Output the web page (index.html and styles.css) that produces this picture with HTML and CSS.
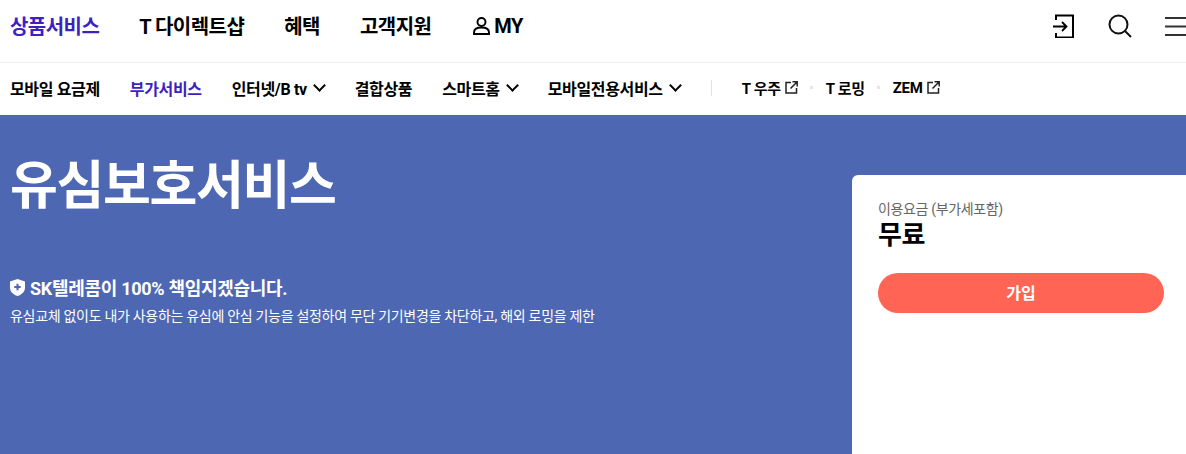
FILE: index.html
```html
<!DOCTYPE html>
<html lang="ko">
<head>
    <meta charset="UTF-8">
    <meta name="viewport" content="width=device-width, initial-scale=1.0">
    <title>유심보호서비스</title>
    <link rel="stylesheet" href="styles.css">
</head>
<body>
    <header class="gnb">
        <nav class="gnb-menu">
            <a class="active">상품서비스</a>
            <a>T 다이렉트샵</a>
            <a>혜택</a>
            <a>고객지원</a>
            <a class="my">
                <svg width="17" height="18" viewBox="0 0 17 18" fill="none" stroke="#000" stroke-width="1.9"><circle cx="8.500" cy="5" r="4"/><path d="M1 17v-1.500C1 12 4 10.500 8.500 10.500s7.500 1.500 7.500 5V17z"/></svg>
                MY
            </a>
        </nav>
        <div class="gnb-icons">
            <svg width="22" height="24" viewBox="0 0 22 24" fill="none" stroke="#000"><path d="M3 6V1.500h17v22H3V19" stroke-width="2"/><path d="M0 12.500h13M9 8l4.500 4.500L9 17" stroke-width="1.800"/></svg>
            <svg width="24" height="24" viewBox="0 0 24 24" fill="none" stroke="#111" stroke-width="2"><circle cx="10.500" cy="10.500" r="9"/><path d="M17 17l6 6"/></svg>
            <svg class="burger" width="21" height="20" viewBox="0 0 21 20" fill="none" stroke="#333" stroke-width="2"><path d="M0 2h21M0 10.500h21M0 19h21"/></svg>
        </div>
    </header>

    <nav class="lnb">
        <a>모바일 요금제</a>
        <a class="active">부가서비스</a>
        <a>인터넷/B tv <i class="chev"></i></a>
        <a>결합상품</a>
        <a>스마트홈 <i class="chev"></i></a>
        <a>모바일전용서비스 <i class="chev"></i></a>
        <span class="divider"></span>
        <div class="ext">
            <a>T 우주 <svg class="out" width="13" height="13" viewBox="0 0 13 13" fill="none" stroke="#222" stroke-width="1.500"><path d="M6 1.500H1v10.500h10.500V7M7.500 .8h4.700v4.700M12 1L5.500 7.500"/></svg></a>
            <span class="dot"></span>
            <a>T 로밍</a>
            <span class="dot"></span>
            <a>ZEM <svg class="out" width="13" height="13" viewBox="0 0 13 13" fill="none" stroke="#222" stroke-width="1.500"><path d="M6 1.500H1v10.500h10.500V7M7.500 .8h4.700v4.700M12 1L5.500 7.500"/></svg></a>
        </div>
    </nav>

    <main class="hero">
        <div class="hero-text">
            <h1>유심보호서비스</h1>
            <p class="lead">
                <svg class="shield" width="15" height="17" viewBox="0 0 15 17"><path fill="#fff" d="M7.500 0L15 2.500V8.500c0 4.200-3.200 7.200-7.500 8.500C3.200 15.700 0 12.700 0 8.500V2.500z"/><path stroke="#4d67b2" stroke-width="2" d="M7.500 4.800v6.500M4.300 8h6.400"/></svg>
                SK텔레콤이 100% 책임지겠습니다.
            </p>
            <p class="desc">유심교체 없이도 내가 사용하는 유심에 안심 기능을 설정하여 무단 기기변경을 차단하고, 해외 로밍을 제한</p>
        </div>
        <aside class="price-card">
            <div class="price-label">이용요금 (부가세포함)</div>
            <div class="price">무료</div>
            <button type="button" class="join-btn">가입</button>
        </aside>
    </main>
</body>
</html>
```

FILE: styles.css
```css
* {
    box-sizing: border-box;
}
html, body {
    height: 100%;
}
body {
    margin: 0;
    display: flex;
    flex-direction: column;
    overflow: hidden;
    font-family: Roboto, "Noto Sans CJK KR", sans-serif;
    background-color: white;
    color: #000;
}
.gnb {
    height: 63px;
    flex: none;
    display: flex;
    align-items: center;
    justify-content: space-between;
    padding: 0 0 11px 10px;
    border-bottom: 1px solid #eee;
}
.gnb-menu {
    display: flex;
    align-items: center;
    gap: 40px;
    font-size: 20px;
    font-weight: 700;
    letter-spacing: -0.55px;
}
.gnb-menu a.active {
    color: #3d1fc4;
}
.my {
    display: flex;
    align-items: center;
    gap: 4px;
    margin-left: 2px;
}
.gnb-icons {
    display: flex;
    align-items: center;
    gap: 33px;
}
.lnb {
    height: 52px;
    flex: none;
    display: flex;
    align-items: center;
    gap: 30px;
    padding: 0 10px 3px;
    font-size: 16px;
    font-weight: 700;
    letter-spacing: -0.35px;
}
.lnb a {
    display: flex;
    align-items: center;
    gap: 5px;
}
.lnb a.active {
    color: #3d1fc4;
}
.chev {
    width: 9px;
    height: 9px;
    margin: -4px 1px 0 3px;
    border-right: 2px solid #000;
    border-bottom: 2px solid #000;
    transform: rotate(45deg);
}
.divider {
    width: 1px;
    height: 16px;
    background-color: #e2e2e2;
}
.ext {
    display: flex;
    align-items: center;
    gap: 12.5px;
    font-size: 15px;
    font-weight: 700;
    letter-spacing: -0.3px;
}
.ext a {
    gap: 4px;
}
.dot {
    width: 3px;
    height: 3px;
    background-color: #e5e5e5;
}
.hero {
    flex: 1;
    display: flex;
    justify-content: space-between;
    align-items: flex-start;
    padding-left: 10px;
    background-color: #4d67b2;
    color: white;
}
h1 {
    margin: 36px 0 0;
    font-size: 52px;
    line-height: 72px;
    font-weight: 700;
    letter-spacing: -1.35px;
}
.lead {
    margin: 53px 0 0;
    display: flex;
    align-items: center;
    gap: 5px;
    font-size: 18px;
    line-height: 26px;
    font-weight: 700;
    letter-spacing: -0.3px;
}
.shield {
    margin-bottom: 4px;
}
.desc {
    margin: 4px 0 0;
    font-size: 14px;
    line-height: 20px;
    letter-spacing: -0.3px;
}
.price-card {
    align-self: stretch;
    width: 334px;
    margin-top: 60px;
    padding: 25px 22px 0 26px;
    background-color: white;
    border-radius: 6px 0 0 0;
    color: #000;
}
.price-label {
    font-size: 14px;
    line-height: 18px;
    letter-spacing: -0.35px;
    color: #666;
}
.price {
    margin-top: 1px;
    font-size: 26px;
    line-height: 32px;
    font-weight: 700;
    letter-spacing: -0.5px;
}
.join-btn {
    display: block;
    width: 100%;
    height: 40px;
    margin-top: 22px;
    padding-bottom: 3px;
    border: none;
    border-radius: 20px;
    background-color: #ff6455;
    color: white;
    font-family: inherit;
    font-size: 16px;
    font-weight: 700;
}
```
